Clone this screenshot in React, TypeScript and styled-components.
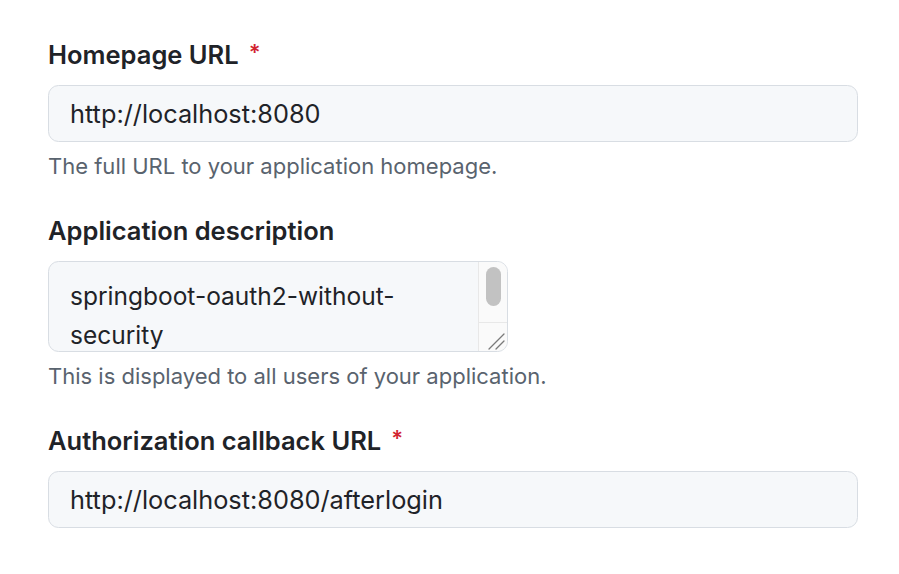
import styled, { createGlobalStyle } from 'styled-components';

const Colors = {
  fg: '#1f2328',
  muted: '#59636e',
  danger: '#d1242f',
  inputBg: '#f6f8fa',
  border: '#d8dde3',
  trackBg: '#fafafa',
  trackBorder: '#e8e8e8',
  thumb: '#c2c2c2',
};

const fontStack = `Inter, 'Liberation Sans', sans-serif`;

const GlobalStyle = createGlobalStyle`
  html, body {
    margin: 0;
    background: #ffffff;
  }
  body {
    font-family: ${fontStack};
    color: ${Colors.fg};
    -webkit-font-smoothing: antialiased;
  }
`;

type Field = {
  label: string;
  required?: boolean;
  value: string;
  note?: string;
  multiline?: boolean;
};

const fields: Field[] = [
  {
    label: 'Homepage URL',
    required: true,
    value: 'http://localhost:8080',
    note: 'The full URL to your application homepage.',
  },
  {
    label: 'Application description',
    value: 'springboot-oauth2-without-security',
    note: 'This is displayed to all users of your application.',
    multiline: true,
  },
  {
    label: 'Authorization callback URL',
    required: true,
    value: 'http://localhost:8080/afterlogin',
  },
];

export default function App() {
  return (
    <>
      <GlobalStyle />
      <Form>
        {fields.map((field) => (
          <FormGroup key={field.label}>
            <Label>
              {field.label}
              {field.required && <Required>*</Required>}
            </Label>
            {field.multiline ? (
              <TextareaBox>
                <TextareaContent>{field.value}</TextareaContent>
                <ScrollTrack>
                  <ScrollThumb />
                  <Resizer>
                    <svg width="28" height="28" viewBox="0 0 28 28">
                      <path
                        d="M10 26 L25 11 M17 26 L25 18"
                        stroke="#7a7a7a"
                        strokeWidth="1.3"
                        strokeLinecap="round"
                        fill="none"
                      />
                    </svg>
                  </Resizer>
                </ScrollTrack>
              </TextareaBox>
            ) : (
              <TextInput readOnly value={field.value} />
            )}
            {field.note && <Note>{field.note}</Note>}
          </FormGroup>
        ))}
      </Form>
    </>
  );
}

const Form = styled.form`
  display: flex;
  flex-direction: column;
  gap: 36px;
  width: 810px;
  padding: 40px 0 0 48px;
`;

const FormGroup = styled.div`
  display: flex;
  flex-direction: column;
  align-items: flex-start;
`;

const Label = styled.label`
  display: flex;
  align-items: flex-start;
  margin-bottom: 15px;
  font-weight: 600;
  font-size: 25.5px;
  line-height: 30px;
  color: ${Colors.fg};
`;

const Required = styled.span`
  margin-left: 10px;
  font-size: 22px;
  line-height: 24px;
  color: ${Colors.danger};
`;

const TextInput = styled.input`
  box-sizing: border-box;
  width: 810px;
  height: 57px;
  padding: 0 21px;
  border: 1px solid ${Colors.border};
  border-radius: 10.5px;
  background: ${Colors.inputBg};
  font-family: ${fontStack};
  font-size: 25.3px;
  line-height: 55px;
  color: ${Colors.fg};
  outline: none;
`;

const TextareaBox = styled.div`
  box-sizing: border-box;
  display: flex;
  width: 460px;
  height: 91px;
  border: 1px solid ${Colors.border};
  border-radius: 10.5px;
  background: ${Colors.inputBg};
  overflow: hidden;
`;

const TextareaContent = styled.div`
  flex: 1;
  padding: 14.5px 12px 0 21px;
  overflow: hidden;
  font-size: 24.5px;
  line-height: 39px;
  color: ${Colors.fg};
`;

const ScrollTrack = styled.div`
  display: flex;
  flex-direction: column;
  flex-shrink: 0;
  width: 28px;
  border-left: 1px solid ${Colors.trackBorder};
  background: ${Colors.trackBg};
`;

const ScrollThumb = styled.div`
  margin: 5px auto 0;
  width: 15px;
  height: 39px;
  border-radius: 8px;
  background: ${Colors.thumb};
`;

const Resizer = styled.div`
  display: flex;
  margin-top: auto;
  height: 28px;
  border-top: 1px solid ${Colors.trackBorder};
`;

const Note = styled.p`
  margin: 10px 0 0;
  font-size: 22px;
  line-height: 28px;
  color: ${Colors.muted};
`;
